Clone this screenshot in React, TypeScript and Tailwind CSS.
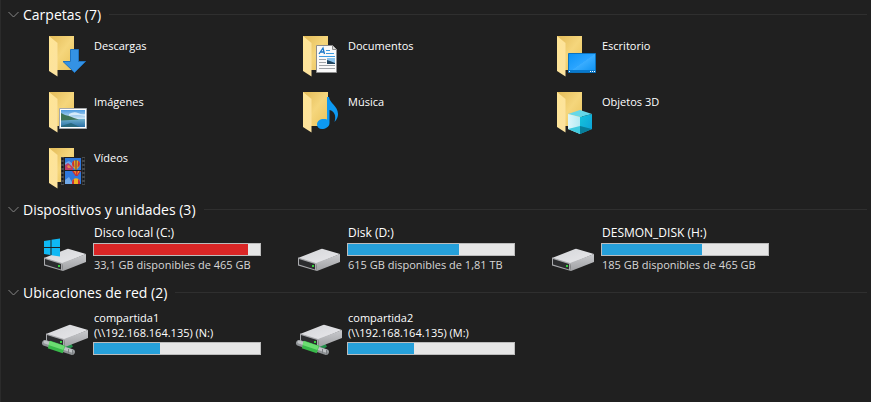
import { useState, type ReactNode } from "react";

function FolderBase() {
  return (
    <>
      <path d="M9 4H34V38H9Z" fill="url(#folderBack)" />
      <path d="M9 4L17.500 11V44.500L9 39Z" fill="url(#folderFront)" />
    </>
  );
}

function Icon({ children }: { children: ReactNode }) {
  return (
    <svg viewBox="0 0 48 48" className="mt-1 size-12 shrink-0" aria-hidden="true">
      {children}
    </svg>
  );
}

function Gradients() {
  return (
    <svg className="absolute size-0" aria-hidden="true">
      <defs>
        <linearGradient id="folderBack" x1="0" y1="0" x2="1" y2="1">
          <stop offset="0" stopColor="#e3bb58" />
          <stop offset="0.5" stopColor="#f5d67c" />
          <stop offset="1" stopColor="#e9c25a" />
        </linearGradient>
        <linearGradient id="folderFront" x1="0" y1="0" x2="1" y2="1">
          <stop offset="0" stopColor="#ffe594" />
          <stop offset="1" stopColor="#fbe2a0" />
        </linearGradient>
        <linearGradient id="desk" x1="0" y1="0" x2="1" y2="1">
          <stop offset="0" stopColor="#0b92f5" />
          <stop offset="0.5" stopColor="#2ba5ff" />
          <stop offset="0.51" stopColor="#3aadff" />
          <stop offset="1" stopColor="#0a90f0" />
        </linearGradient>
        <linearGradient id="sky" x1="0" y1="0" x2="0" y2="1">
          <stop offset="0" stopColor="#4c9be0" />
          <stop offset="1" stopColor="#e2f2fa" />
        </linearGradient>
        <linearGradient id="sea" x1="0" y1="0" x2="0" y2="1">
          <stop offset="0" stopColor="#6fb0cc" />
          <stop offset="1" stopColor="#2a6fa6" />
        </linearGradient>
        <linearGradient id="driveTop" x1="0" y1="0" x2="1" y2="1">
          <stop offset="0" stopColor="#d4d5d8" />
          <stop offset="1" stopColor="#e9e9ec" />
        </linearGradient>
        <linearGradient id="driveSide" x1="0" y1="0" x2="0" y2="1">
          <stop offset="0" stopColor="#c9cacd" />
          <stop offset="1" stopColor="#a0a1a4" />
        </linearGradient>
        <linearGradient id="cube" x1="0" y1="0" x2="1" y2="0">
          <stop offset="0" stopColor="#dcf6fa" />
          <stop offset="1" stopColor="#b4ebf4" />
        </linearGradient>
        <linearGradient id="cubeRight" x1="0" y1="0" x2="1" y2="1">
          <stop offset="0" stopColor="#16c4dc" />
          <stop offset="1" stopColor="#0b9fd8" />
        </linearGradient>
      </defs>
    </svg>
  );
}

function DownloadsIcon() {
  return (
    <Icon>
      <FolderBase />
      <path d="M30.500 17.500H38.500V29.500H45.500L34.500 40.500L23 29.500H30.500Z" fill="#3492e4" stroke="#1f73c0" strokeWidth="1" />
    </Icon>
  );
}

function DocumentsIcon() {
  return (
    <Icon>
      <FolderBase />
      <path d="M22.500 13.500H38.500L42.500 17.500V40.500H22.500Z" fill="#fafafa" stroke="#8d8d8d" />
      <path d="M38.500 13.500V17.500H42.500" fill="#d8d8d8" stroke="#8d8d8d" />
      <path d="M25 22L29 16L30.500 22M26.500 20H30" fill="none" stroke="#1b78c8" strokeWidth="1.300" />
      <path d="M32 18.500H36M32 21.500H40M25 24.500H41" stroke="#3d9be0" />
      <path d="M25 27.500H32M25 30.500H32M25 33.500H41M25 36.500H41" stroke="#a0a4a8" />
      <path d="M33 26H41V32H33Z" fill="#8dc4ec" />
      <path d="M33 28L36 29L41 31V32H33Z" fill="#20455f" />
    </Icon>
  );
}

function DesktopIcon() {
  return (
    <Icon>
      <FolderBase />
      <path d="M20.500 21.500H47.500V40.500H20.500Z" fill="url(#desk)" stroke="#0b72bd" />
      <path d="M21 39H47" stroke="#0878cc" strokeWidth="2" />
      <path d="M21 39.500H22M42 39.500H43M44 39.500H45M46 39.500H47" stroke="#fff" />
    </Icon>
  );
}

function PicturesIcon() {
  return (
    <Icon>
      <FolderBase />
      <path d="M19.500 20.500H46.500V40.500H19.500Z" fill="#fff" stroke="#a5a9ad" />
      <path d="M21 22H45V32H21Z" fill="url(#sky)" />
      <path d="M21 31H45V39H21Z" fill="url(#sea)" />
      <path d="M21 25L25 27L29 28L34 30L39 31.500L21 32.500Z" fill="#3d7358" />
      <path d="M29 26Q34 23 38 25T45 26V28Q36 26 29 28Z" fill="#d4eafa" />
      <path d="M21 38L31 35L40 39H21Z" fill="#286a80" />
    </Icon>
  );
}

function MusicIcon() {
  return (
    <Icon>
      <FolderBase />
      <path
        d="M33 9H35C35.500 15 44 18 44 26C44 29 43 31 40.500 34C42.500 28 40.500 23 35.500 22V35C35.500 39 31 41 28 41C25 41 23 39 23 36.500C23 32 28 30 33 31.500Z"
        fill="#0d99f2"
      />
    </Icon>
  );
}

function ObjectsIcon() {
  return (
    <Icon>
      <FolderBase />
      <path d="M20 26L32 22L44 26L32 29Z" fill="#66d8e8" />
      <path d="M20 26L32 29V46L20 41Z" fill="url(#cube)" />
      <path d="M44 26L32 29V46L44 41Z" fill="url(#cubeRight)" />
      <path d="M20 41L32 38V46Z" fill="#3fcbe0" />
      <path d="M44 41L32 38V46Z" fill="#087e9b" />
    </Icon>
  );
}

function VideosIcon() {
  return (
    <Icon>
      <FolderBase />
      <path d="M21 13H45V41H21Z" fill="#47494b" />
      <path d="M24 13H42V41H24Z" fill="#1f2023" />
      <path d="M25 14H41V26H25ZM25 27H41V40H25Z" fill="#2f78dc" />
      <path d="M25 19L29 17L33 20L32 25H25ZM25 36L29 33L33 40H25Z" fill="#71a9e8" />
      <path d="M25 21L28 19L33 23V26H25Z" fill="#bb3e6b" />
      <path d="M27 22L29 21L31 24H28Z" fill="#e88a4a" />
      <path d="M32 20C32 15 40 15 40 20C40 23 37 24 37 26H35C35 24 32 23 32 20Z" fill="#efb41f" />
      <path d="M32 20C32 18 33 17 34 16.500L34.500 23.500Q32 22 32 20ZM38 16.500Q40 17.500 40 20Q40 22 37.500 23.500Z" fill="#c52e3c" />
      <path d="M35.500 16H36.500V26H35.500Z" fill="#5c2c3c" />
      <path d="M32 27H41L37.500 32H35.500Z" fill="#c52e3c" />
      <path d="M34 27H35.500L36.200 31ZM38 27H39.500L37 31Z" fill="#efb41f" />
      <path d="M32 40V38C32 33 40 33 40 38V40Z" fill="#efb41f" />
      <path d="M32 40V38Q32 36 34 35V40ZM38 35Q40 36 40 38V40H38Z" fill="#c52e3c" />
      <path d="M22.500 14V41M43.500 14V41" stroke="#17181a" strokeWidth="2" strokeDasharray="2 2" />
    </Icon>
  );
}

function DriveShape() {
  return (
    <>
      <path d="M4 31L27 22Q28 21.500 29 22L46 27L22 37Z" fill="url(#driveTop)" />
      <path d="M22 36L46 27V35L23 44Z" fill="url(#driveSide)" />
      <path d="M4 30.500L22 36L23 44L4 38.500Z" fill="#a9aaad" />
      <path d="M5 32L21 37V42.500L5 37.500Z" fill="#2c2d2f" />
      <path d="M18 38H20V40H18Z" fill="#35d13c" />
    </>
  );
}

function DriveIcon() {
  return (
    <Icon>
      <DriveShape />
    </Icon>
  );
}

function SystemDriveIcon() {
  return (
    <Icon>
      <DriveShape />
      <path d="M4 14L10.500 13V20H4ZM11.500 12.800L20 11.500V20H11.500ZM4 21H10.500V28L4 27ZM11.500 21H20V29.500L11.500 28.200Z" fill="#0fb8f4" />
    </Icon>
  );
}

function NetworkDriveIcon() {
  return (
    <Icon>
      <path d="M23 40L32 35" stroke="#22904a" strokeWidth="4" />
      <g transform="translate(2 -7)">
        <DriveShape />
      </g>
      <path d="M5 33L32 42" stroke="#8f9396" strokeWidth="6" strokeLinecap="round" />
      <path d="M5 32L32 41" stroke="#bfc2c5" strokeWidth="3" strokeLinecap="round" />
      <path d="M9 34.500L24 39.500" stroke="#38b94a" strokeWidth="8" />
      <path d="M9 33L24 38" stroke="#6cdd72" strokeWidth="4" />
      <path d="M28.500 39V44M32.500 40V45" stroke="#7c8083" />
    </Icon>
  );
}

function Section({ title, children }: { title: string; children: ReactNode }) {
  const [open, setOpen] = useState(true);
  return (
    <section>
      <h2 className="flex items-center gap-2 pr-1 pl-[7px]">
        <button
          type="button"
          aria-expanded={open}
          onClick={() => setOpen(!open)}
          className="flex items-center gap-1 text-[14px] leading-[27px] whitespace-nowrap text-white"
        >
          <svg viewBox="0 0 11 11" className="w-[11px]" aria-hidden="true">
            <path d="M0.500 3L5.500 8L10.500 3" fill="none" stroke="#858585" />
          </svg>
          {title}
        </button>
        <span className="h-px grow bg-[#2f2f2f]" />
      </h2>
      {open && children}
    </section>
  );
}

const grid = "grid grid-cols-[repeat(auto-fill,254px)] pl-[39px]";

const folders = [
  { name: "Descargas", icon: <DownloadsIcon /> },
  { name: "Documentos", icon: <DocumentsIcon /> },
  { name: "Escritorio", icon: <DesktopIcon /> },
  { name: "Imágenes", icon: <PicturesIcon /> },
  { name: "Música", icon: <MusicIcon /> },
  { name: "Objetos 3D", icon: <ObjectsIcon /> },
  { name: "Vídeos", icon: <VideosIcon /> },
];

const drives = [
  { name: "Disco local (C:)", info: "33,1 GB disponibles de 465 GB", used: 93, icon: <SystemDriveIcon /> },
  { name: "Disk (D:)", info: "615 GB disponibles de 1,81 TB", used: 67, icon: <DriveIcon /> },
  { name: "DESMON_DISK (H:)", info: "185 GB disponibles de 465 GB", used: 60, icon: <DriveIcon /> },
];

const shares = [
  { name: "compartida1", path: "(\\\\192.168.164.135) (N:)", used: 40 },
  { name: "compartida2", path: "(\\\\192.168.164.135) (M:)", used: 40 },
];

function UsageBar({ label, used }: { label: string; used: number }) {
  return (
    <div
      role="meter"
      aria-label={label}
      aria-valuemin={0}
      aria-valuemax={100}
      aria-valuenow={used}
      className="h-[13px] w-[168px] border border-[#bcbcbc] bg-[#e6e6e6]"
    >
      <div className={used > 90 ? "h-full bg-[#da2626]" : "h-full bg-[#26a0da]"} style={{ width: `${used}%` }} />
    </div>
  );
}

export default function App() {
  return (
    <main className="min-h-screen border-l border-[#2b2b2b] bg-[#202020] pt-px font-['Open_Sans','Noto_Sans',sans-serif] text-[11px] leading-[15px] text-white">
      <Gradients />
      <Section title="Carpetas (7)">
        <ul className={grid}>
          {folders.map((f) => (
            <li key={f.name} className="flex h-14 gap-[6px]">
              {f.icon}
              <span className="pt-[10px]">{f.name}</span>
            </li>
          ))}
        </ul>
      </Section>
      <Section title="Dispositivos y unidades (3)">
        <ul className={grid}>
          {drives.map((d) => (
            <li key={d.name} className="flex h-14 gap-[5px]">
              {d.icon}
              <div className="pt-[2px] whitespace-nowrap">
                <div className="pb-[3px] pl-px text-[12px]">{d.name}</div>
                <UsageBar label={d.name} used={d.used} />
                <div className="pt-px pl-px text-[#d8d8d8]">{d.info}</div>
              </div>
            </li>
          ))}
        </ul>
      </Section>
      <Section title="Ubicaciones de red (2)">
        <ul className={grid}>
          {shares.map((s) => (
            <li key={s.name} className="flex h-14 gap-[5px]">
              <NetworkDriveIcon />
              <div className="pt-1 whitespace-nowrap">
                <div className="pl-px">{s.name}</div>
                <div className="pb-[2px] pl-px">{s.path}</div>
                <UsageBar label={s.name} used={s.used} />
              </div>
            </li>
          ))}
        </ul>
      </Section>
    </main>
  );
}
